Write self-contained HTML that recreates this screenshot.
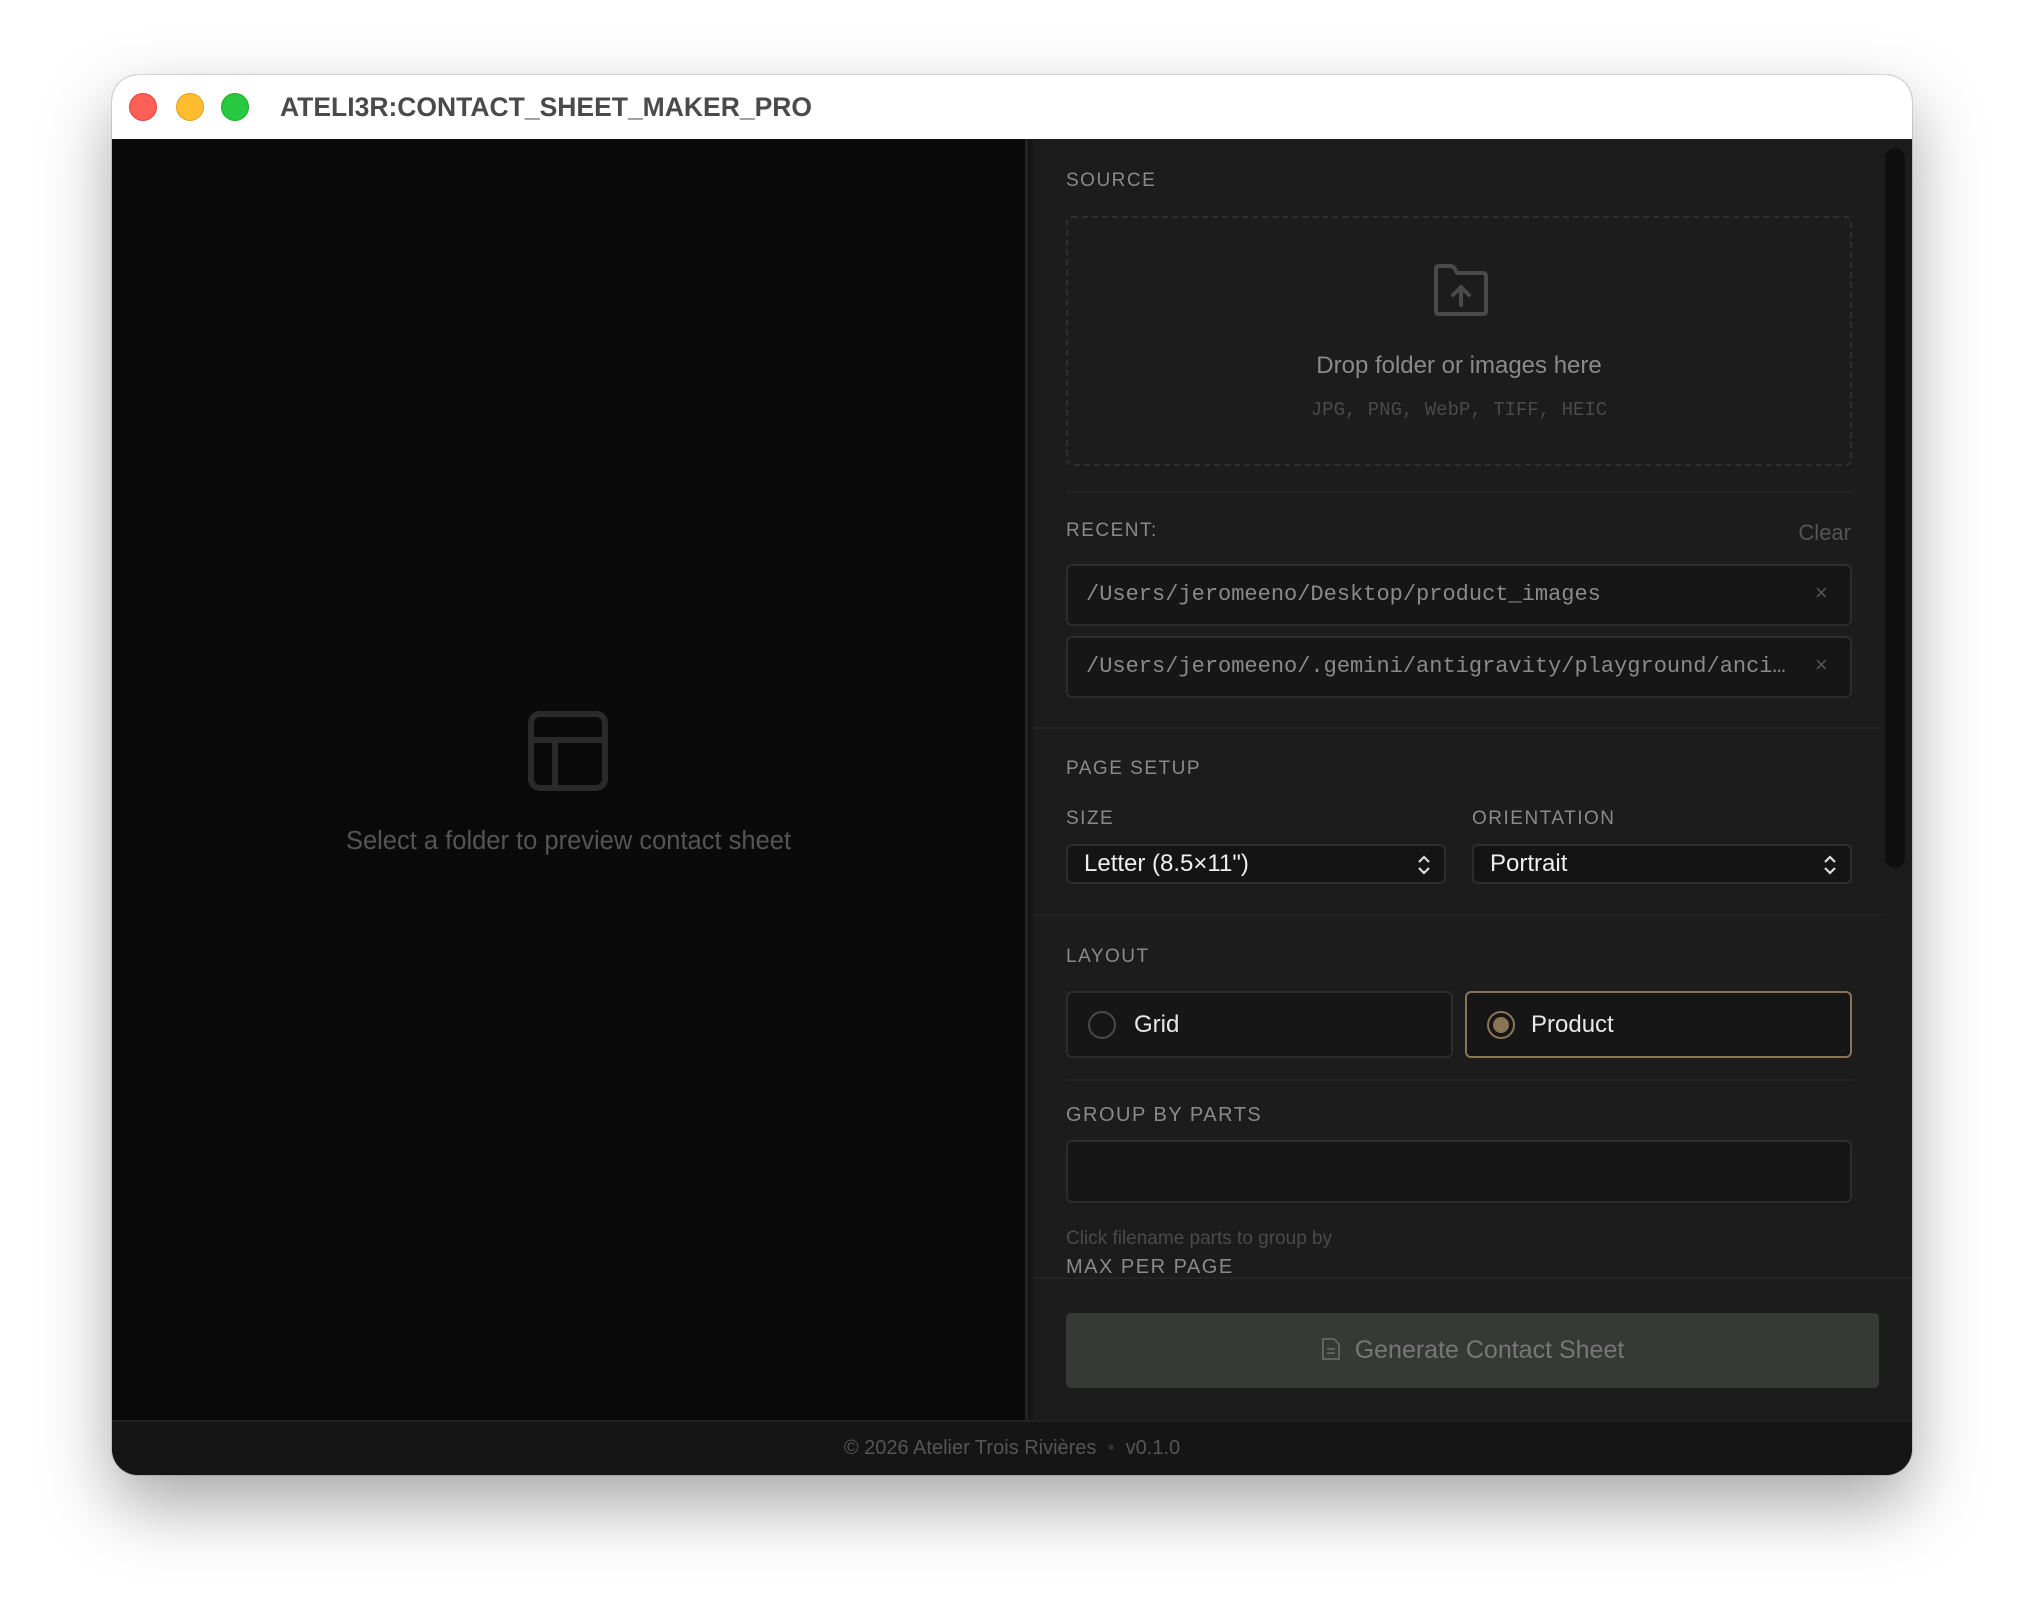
<!DOCTYPE html>
<html><head><meta charset="utf-8"><style>
*{box-sizing:border-box;margin:0;padding:0}
body{width:2024px;height:1624px;background:#fff;font-family:"Liberation Sans",sans-serif;position:relative;overflow:hidden}
.win{position:absolute;left:112px;top:75px;width:1800px;height:1400px;border-radius:26px;overflow:hidden;background:#141414;box-shadow:0 30px 70px rgba(0,0,0,.35),0 0 0 1px rgba(0,0,0,.12)}
.title{position:absolute;left:0;top:0;width:100%;height:64px;background:#fff}
.dot{position:absolute;top:18px;width:28px;height:28px;border-radius:50%}
.ttl{position:absolute;left:168px;top:17px;font-size:26.5px;font-weight:bold;color:#4a4a4a;letter-spacing:0}
.left{position:absolute;left:0;top:64px;width:913px;height:1281px;background:#0a0a0a}
.divl{position:absolute;left:913px;top:64px;width:8px;height:1281px;background:#151515;border-left:3px solid #232323}
.right{position:absolute;left:921px;top:64px;width:879px;height:1281px;background:#1c1c1c}
.foot{position:absolute;left:0;top:1345px;width:100%;height:55px;background:#151515;border-top:2px solid #222;text-align:center;color:#555;font-size:20px;line-height:53px}
.a{position:absolute}
.lbl{position:absolute;left:33px;color:#8a8a8a;font-size:19px;letter-spacing:1.5px}
.sep{position:absolute;height:2px;background:#232323}
.mono{font-family:"Liberation Mono",monospace}
.box{position:absolute;background:#161616;border:2px solid #2c2c2c;border-radius:6px}
</style></head><body>
<div class="win">
 <div class="title">
  <div class="dot" style="left:17px;background:#fe5f57;border:1px solid #e0443e"></div>
  <div class="dot" style="left:64px;background:#febc2e;border:1px solid #dea123"></div>
  <div class="dot" style="left:109px;background:#28c840;border:1px solid #1aab29"></div>
  <div class="ttl">ATELI3R:CONTACT_SHEET_MAKER_PRO</div>
 </div>
 <div class="left">
  <svg class="a" style="left:416px;top:572px" width="80" height="80" viewBox="0 0 80 80" fill="none" stroke="#2a2a2a" stroke-width="6"><rect x="3" y="3" width="74" height="74" rx="9"/><line x1="3" y1="29" x2="77" y2="29"/><line x1="27" y1="29" x2="27" y2="77"/></svg>
  <div class="a" style="left:0;width:913px;top:688px;text-align:center;color:#555;font-size:25.5px">Select a folder to preview contact sheet</div>
 </div>
 <div class="divl"></div>
 <div class="right">
  <div class="a" style="left:852px;top:9px;width:20px;height:720px;background:#0f0f0f;border-radius:10px"></div>
  <div class="lbl" style="top:31px">SOURCE</div>
  <div class="a" style="left:33px;top:77px;width:786px;height:250px;border:2px dashed #2e2e2e;border-radius:6px"></div>
  <svg class="a" style="left:398px;top:124px" width="60" height="54" viewBox="0 0 60 54" fill="none" stroke="#4a4a4a" stroke-width="4" stroke-linejoin="round" stroke-linecap="round"><path d="M5 6 Q5 3 8 3 H20 Q22 3 24 6 L26 10 H52 Q55 10 55 13 V48 Q55 51 52 51 H8 Q5 51 5 48 Z"/><path d="M30 42 V24 M22 32 L30 24 L38 32"/></svg>
  <div class="a" style="left:33px;width:786px;top:213px;text-align:center;color:#8a8a8a;font-size:24px">Drop folder or images here</div>
  <div class="a mono" style="left:33px;width:786px;top:260px;text-align:center;color:#4a4a4a;font-size:19px">JPG, PNG, WebP, TIFF, HEIC</div>
  <div class="sep" style="left:33px;width:786px;top:352px"></div>
  <div class="lbl" style="top:381px">RECENT:</div>
  <div class="a" style="right:61px;top:381px;color:#555;font-size:22px">Clear</div>
  <div class="box mono" style="left:33px;top:425px;width:786px;height:62px;color:#8a8a8a;font-size:22px;line-height:58px;padding-left:18px">/Users/jeromeeno/Desktop/product_images<span style="position:absolute;right:22px;color:#555">×</span></div>
  <div class="box mono" style="left:33px;top:497px;width:786px;height:62px;color:#8a8a8a;font-size:22px;line-height:58px;padding-left:18px;white-space:nowrap;overflow:hidden">/Users/jeromeeno/.gemini/antigravity/playground/anci…<span style="position:absolute;right:22px;color:#555">×</span></div>
  <div class="sep" style="left:0;width:852px;top:588px"></div>
  <div class="lbl" style="top:619px">PAGE SETUP</div>
  <div class="lbl" style="top:669px">SIZE</div>
  <div class="lbl" style="top:669px;left:439px">ORIENTATION</div>
  <div class="box" style="left:33px;top:705px;width:380px;height:40px;background:#141414;color:#eee;font-size:24px;line-height:36px;padding-left:16px">Letter (8.5×11")<svg class="a" style="right:12px;top:8px" width="16" height="22" viewBox="0 0 16 22" fill="none" stroke="#ddd" stroke-width="2.2"><path d="M3 8 L8 3 L13 8 M3 14 L8 19 L13 14"/></svg></div>
  <div class="box" style="left:439px;top:705px;width:380px;height:40px;background:#141414;color:#eee;font-size:24px;line-height:36px;padding-left:16px">Portrait<svg class="a" style="right:12px;top:8px" width="16" height="22" viewBox="0 0 16 22" fill="none" stroke="#ddd" stroke-width="2.2"><path d="M3 8 L8 3 L13 8 M3 14 L8 19 L13 14"/></svg></div>
  <div class="sep" style="left:0;width:852px;top:775px"></div>
  <div class="lbl" style="top:807px">LAYOUT</div>
  <div class="box" style="left:33px;top:852px;width:387px;height:67px;color:#e8e8e8;font-size:24px;line-height:63px;padding-left:66px">Grid<div class="a" style="left:20px;top:18px;width:28px;height:28px;border-radius:50%;border:2px solid #4a4a4a"></div></div>
  <div class="box" style="left:432px;top:852px;width:387px;height:67px;border-color:#8a7456;color:#e8e8e8;font-size:24px;line-height:63px;padding-left:64px">Product<div class="a" style="left:20px;top:18px;width:28px;height:28px;border-radius:50%;border:2px solid #8a7456;background:#161616"><div class="a" style="left:4px;top:4px;width:16px;height:16px;border-radius:50%;background:#8a7456"></div></div></div>
  <div class="sep" style="left:33px;width:786px;top:940px"></div>
  <div class="lbl" style="top:965px;font-size:20px">GROUP BY PARTS</div>
  <div class="box" style="left:33px;top:1001px;width:786px;height:63px"></div>
  <div class="a" style="left:33px;top:1089px;color:#4a4a4a;font-size:19px">Click filename parts to group by</div>
  <div class="lbl" style="top:1117px;font-size:20px">MAX PER PAGE</div>
  <div class="sep" style="left:0;width:879px;top:1138px"></div>
  <div class="a" style="left:0;top:1140px;width:879px;height:141px;background:#1c1c1c"></div>
  <div class="a" style="left:33px;top:1174px;width:813px;height:75px;background:#363a35;border-radius:5px;text-align:center;color:#777;font-size:25px;line-height:75px"><svg style="vertical-align:-3px;margin-right:14px" width="20" height="24" viewBox="0 0 20 24" fill="none" stroke="#666" stroke-width="1.8"><path d="M2 2 H13 L18 7 V22 H2 Z M6 12 H14 M6 16 H14"/></svg>Generate Contact Sheet</div>
 </div>
 <div class="foot">© 2026 Atelier Trois Rivières &nbsp;<span style="color:#333">•</span>&nbsp; v0.1.0</div>
</div>
</body></html>
